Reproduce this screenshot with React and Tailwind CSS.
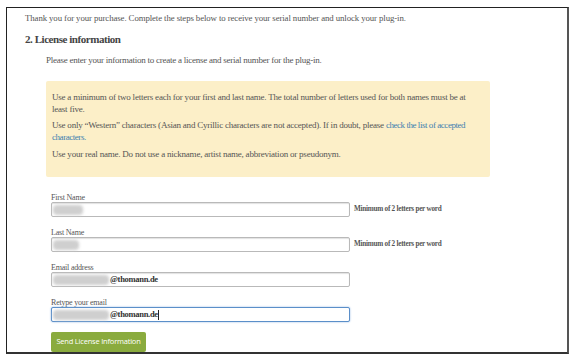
import React from "react";

const serif = { fontFamily: '"Liberation Serif", "DejaVu Serif", serif' };

function Field({ label, top, blurW, suffix, hint, focus }) {
  return (
    <div className={top}>
      <div className="text-[8px] leading-[9px] text-[#555] tracking-[-0.2px]">{label}</div>
      <div className="flex items-center">
        <div
          className={
            "relative w-[299px] h-[15px] rounded-[2px] bg-white flex items-center " +
            (focus
              ? "border-[1.5px] border-[#5b8fc9] shadow-[0_0_2px_#8fb4e0]"
              : "border border-[#b9b9b9] shadow-[inset_0_1px_1px_rgba(0,0,0,0.12)]")
          }
        >
          <div
            className="ml-[1px] h-[10px] bg-[#cfcfcf] blur-[1.5px] rounded-sm"
            style={{ width: blurW }}
          />
          {suffix && (
            <span className="ml-[1px] text-[8.5px] text-[#333] font-bold tracking-[-0.3px]">
              {suffix}
            </span>
          )}
          {focus && <span className="w-px h-[10px] bg-[#222]" />}
        </div>
        {hint && (
          <span className="ml-[4px] text-[7.2px] font-bold text-[#555] tracking-[-0.25px]">
            {hint}
          </span>
        )}
      </div>
    </div>
  );
}

export default function App() {
  return (
    <div className="w-[574px] h-[359px] bg-white overflow-hidden" style={serif}>
      <div className="ml-[6px] mt-[7px] w-[563px] h-[347px] border-l border-t-[1.5px] border-r-2 border-b-2 border-l-[#222] border-t-[#222] border-r-[#555] border-b-[#333] pl-[18px]">
        <div className="pt-[4px] text-[8.8px] leading-[12px] text-[#555] tracking-[-0.1px]">
          Thank you for your purchase. Complete the steps below to receive your serial number and unlock your plug-in.
        </div>
        <div className="mt-[8px] text-[11px] leading-[14px] font-bold text-[#444] tracking-[-0.45px]">
          2. License information
        </div>
        <div className="mt-[9px] ml-[21px] text-[9px] leading-[11px] text-[#555] tracking-[-0.25px]">
          Please enter your information to create a license and serial number for the plug-in.
        </div>
        <div className="mt-[15px] ml-[21px] w-[444px] h-[96px] bg-[#fcefc8] rounded-[2px] pl-[6px] pr-[20px] pt-[10px] text-[9px] leading-[12px] text-[#555] tracking-[-0.22px]">
          <p>
            Use a minimum of two letters each for your first and last name. The total number of letters used for both names must be at least five.
          </p>
          <p className="mt-[4px]">
            Use only “Western” characters (Asian and Cyrillic characters are not accepted). If in doubt, please{" "}
            <a className="text-[#3f7fb0] tracking-[-0.45px]">check the list of accepted characters.</a>
          </p>
          <p className="mt-[5px]">
            Use your real name. Do not use a nickname, artist name, abbreviation or pseudonym.
          </p>
        </div>
        <div className="ml-[26px]">
          <Field label="First Name" top="mt-[16px]" blurW={30} hint="Minimum of 2 letters per word" />
          <Field label="Last Name" top="mt-[11px]" blurW={26} hint="Minimum of 2 letters per word" />
          <Field label="Email address" top="mt-[11px]" blurW={56} suffix="@thomann.de" />
          <Field label="Retype your email" top="mt-[11px]" blurW={56} suffix="@thomann.de" focus />
          <button
            className="mt-[10px] w-[95px] h-[20px] rounded-[2px] bg-[#8aab3e] text-white text-[7.5px] tracking-[-0.2px] flex items-center justify-center"
            style={{ fontFamily: '"Open Sans", "Liberation Sans", sans-serif' }}
          >
            Send License Information
          </button>
        </div>
      </div>
    </div>
  );
}
